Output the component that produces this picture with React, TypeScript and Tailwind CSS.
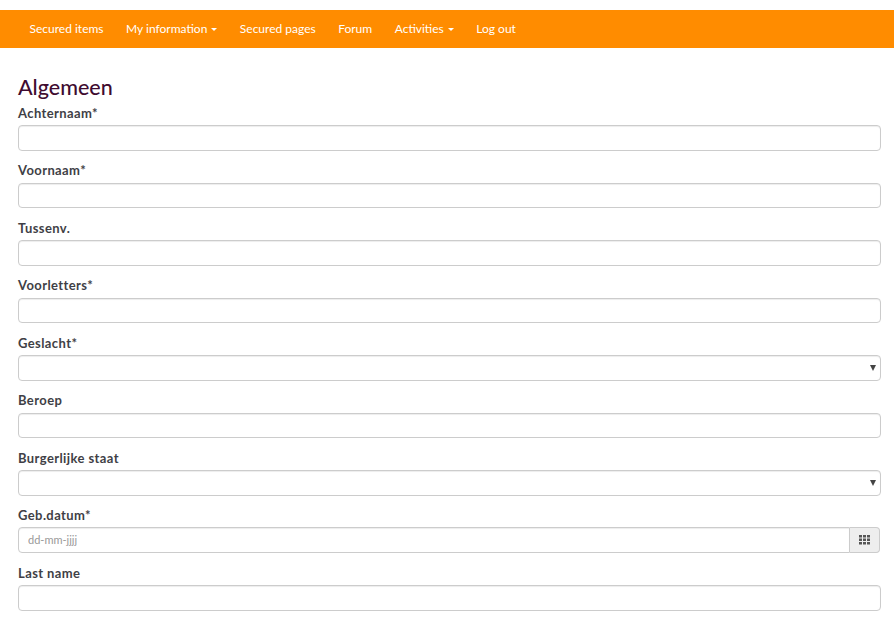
const navItems = [
  { label: "Secured items" },
  { label: "My information", caret: true },
  { label: "Secured pages" },
  { label: "Forum" },
  { label: "Activities", caret: true },
  { label: "Log out" },
];

type Field = {
  label: string;
  kind?: "select" | "date";
};

const fields: Field[] = [
  { label: "Achternaam*" },
  { label: "Voornaam*" },
  { label: "Tussenv." },
  { label: "Voorletters*" },
  { label: "Geslacht*", kind: "select" },
  { label: "Beroep" },
  { label: "Burgerlijke staat", kind: "select" },
  { label: "Geb.datum*", kind: "date" },
  { label: "Last name" },
];

function GridIcon() {
  return (
    <svg width="11" height="10" viewBox="0 0 11 10" fill="#555">
      <rect x="0" y="0" width="3" height="2.5" />
      <rect x="4" y="0" width="3" height="2.5" />
      <rect x="8" y="0" width="3" height="2.5" />
      <rect x="0" y="3.5" width="3" height="2.5" />
      <rect x="4" y="3.5" width="3" height="2.5" />
      <rect x="8" y="3.5" width="3" height="2.5" />
      <rect x="0" y="7" width="3" height="2.5" />
      <rect x="4" y="7" width="3" height="2.5" />
      <rect x="8" y="7" width="3" height="2.5" />
    </svg>
  );
}

function FormField({ label, kind }: Field) {
  return (
    <div className="mb-[13px] flex flex-col">
      <label className="h-[19px] text-[13px] leading-[15px] font-bold tracking-[0.4px] text-[#3f3f46]">
        {label}
      </label>
      {kind === "date" ? (
        <div className="mr-px flex h-[25.5px]">
          <input
            placeholder="dd-mm-jjjj"
            className="min-w-0 flex-1 rounded-l border border-[#ccc] px-[9px] text-[11px] text-[#444] shadow-[inset_0_1px_1px_rgba(0,0,0,0.075)] outline-none placeholder:text-[#999]"
          />
          <span className="flex h-[26px] w-[30px] items-center justify-center rounded-r border border-l-0 border-[#ccc] bg-[#eee]">
            <GridIcon />
          </span>
        </div>
      ) : (
        <div className="relative h-[25.5px]">
          <input className="h-full w-full rounded border border-[#ccc] px-[9px] text-xs shadow-[inset_0_1px_1px_rgba(0,0,0,0.075)] outline-none" />
          {kind === "select" && (
            <span className="absolute top-[10px] right-[5px] h-0 w-0 border-x-[3px] border-t-[6px] border-x-transparent border-t-[#444]" />
          )}
        </div>
      )}
    </div>
  );
}

export default function App() {
  return (
    <div className="min-h-[629px] overflow-hidden bg-white pt-2.5 font-['Lato',sans-serif]">
      <nav className="flex h-[38px] items-center gap-[22.5px] bg-[#ff8c00] pl-[29.5px]">
        {navItems.map((item) => (
          <a
            key={item.label}
            className="flex items-center gap-1 text-xs text-white"
          >
            {item.label}
            {item.caret && (
              <span className="h-0 w-0 border-x-[3px] border-t-[3px] border-x-transparent border-t-white" />
            )}
          </a>
        ))}
      </nav>
      <main className="pt-[26px] pr-[13px] pl-[18px]">
        <h1 className="h-[31.5px] text-[21.5px] leading-[26px] font-medium text-[#400b30]">
          Algemeen
        </h1>
        {fields.map((field) => (
          <FormField key={field.label} {...field} />
        ))}
      </main>
    </div>
  );
}
